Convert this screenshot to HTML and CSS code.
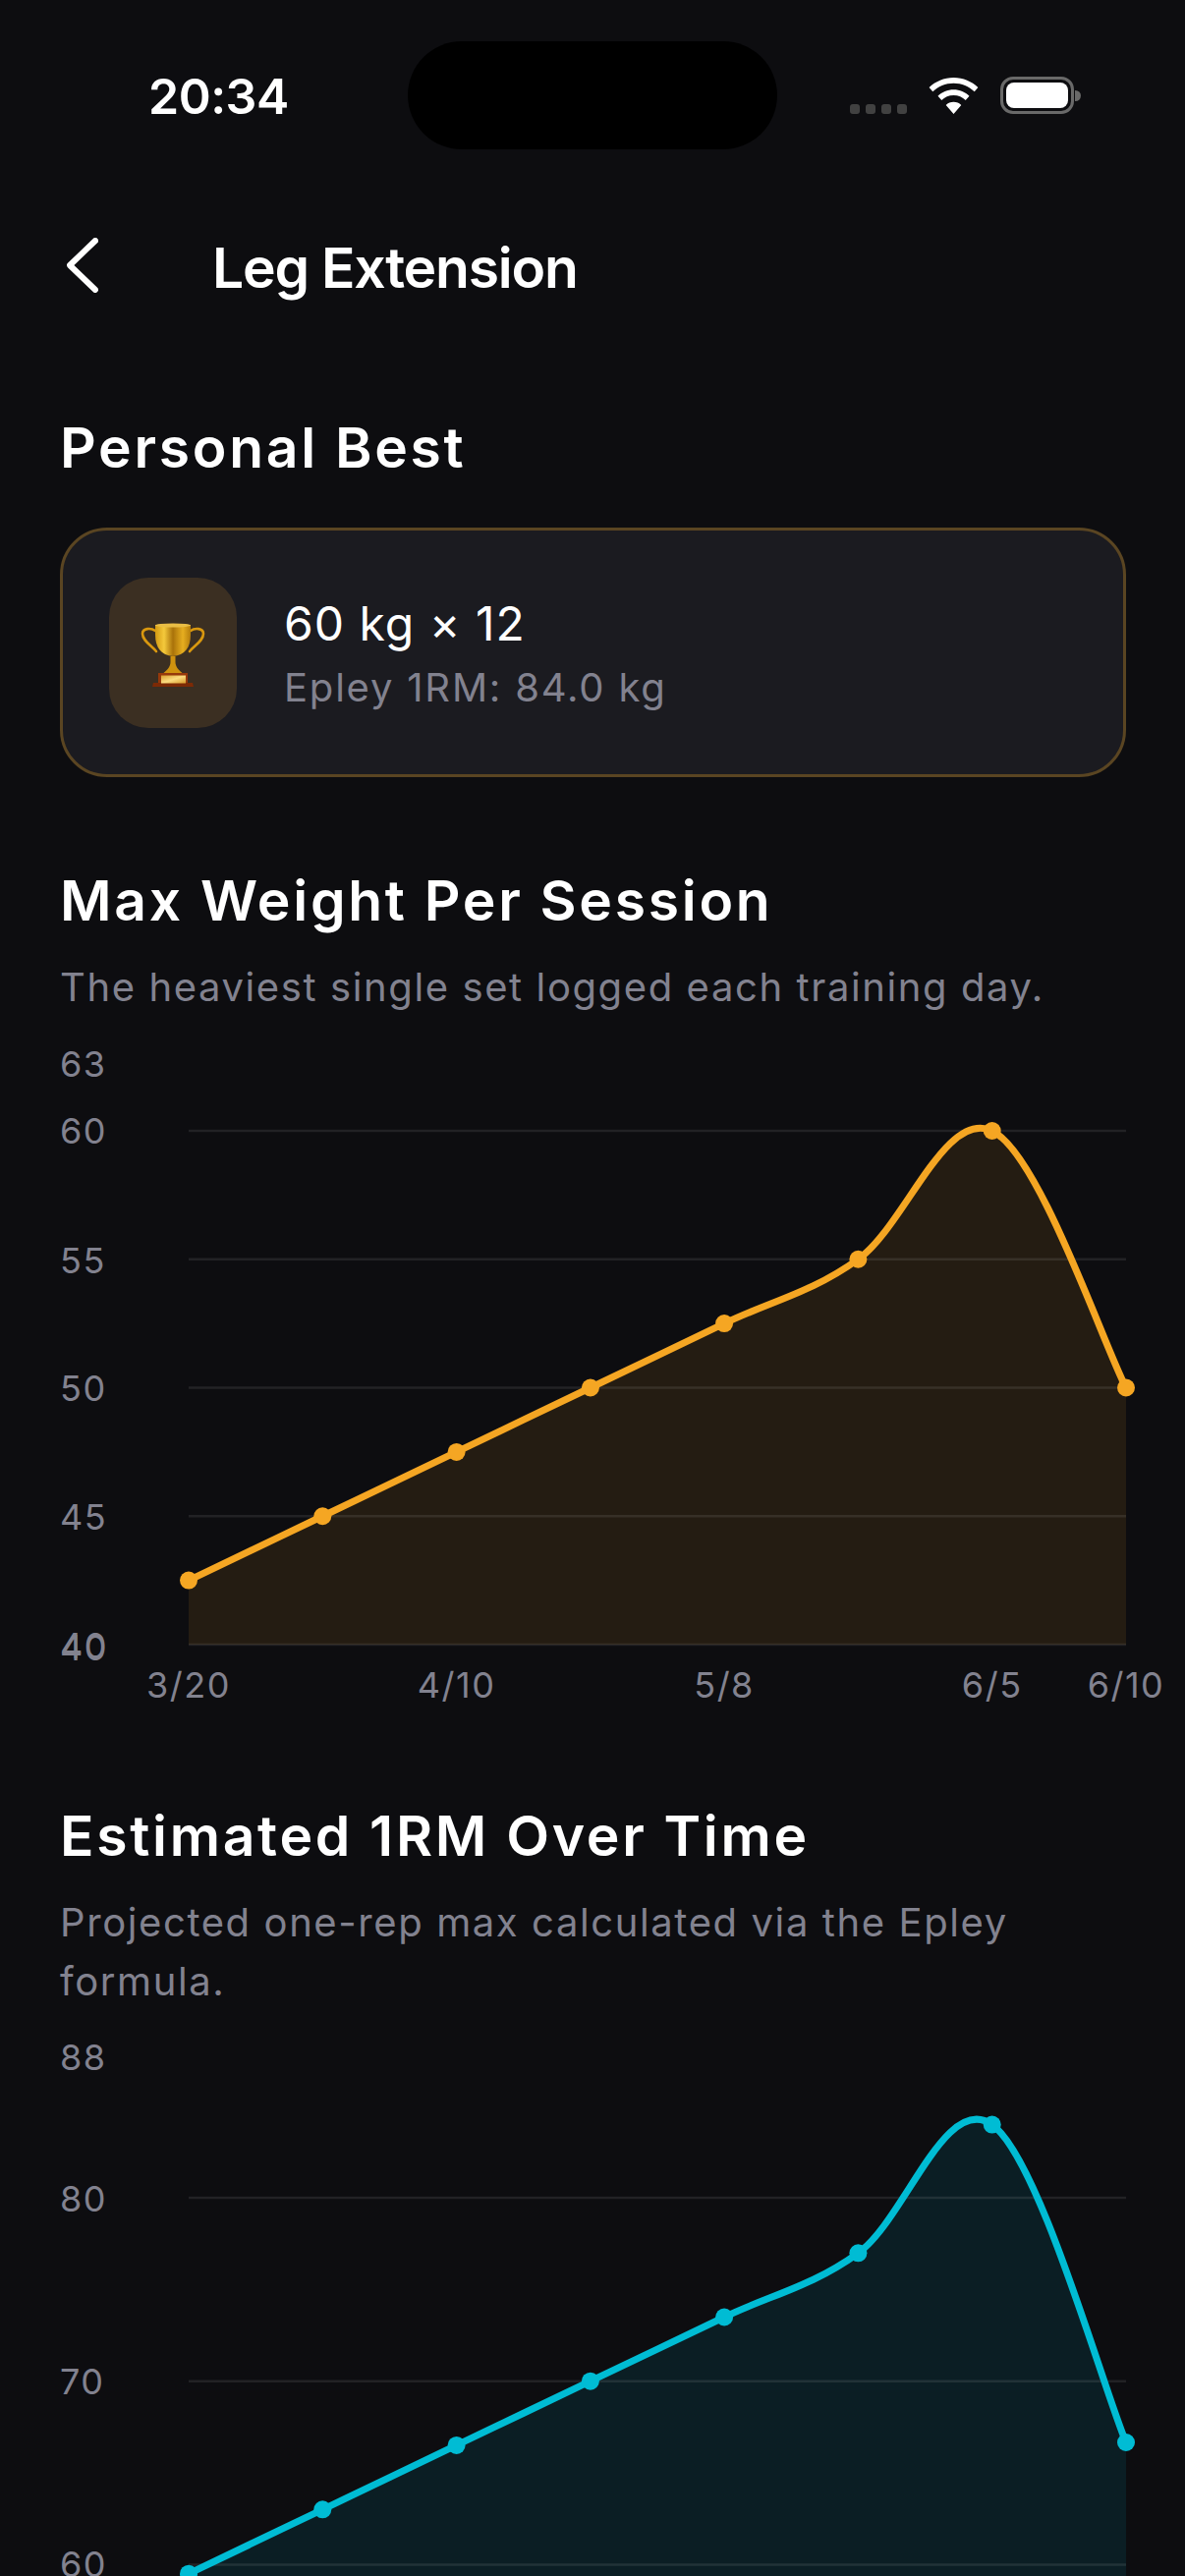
FILE: index.html
```html
<!DOCTYPE html>
<html lang="en">
<head>
<meta charset="utf-8">
<title>Leg Extension</title>
<link rel="stylesheet" href="styles.css">
</head>
<body>
<div class="screen">
  <div class="status">
    <span class="time">20:34</span>
    <div class="island"></div>
    <div class="status-icons">
      <div class="signal"><i></i><i></i><i></i><i></i></div>
      <svg class="wifi" width="51" height="37" viewBox="0 0 51 37"><path fill="#fff" d="M25.500 0C15.800 0 7 3.800 .6 10.100l3.700 4.200C9.700 9 17.200 5.700 25.500 5.700s15.800 3.300 21.200 8.600l3.700-4.200C44 3.800 35.200 0 25.500 0zM25.500 12.300c-6.200 0-11.900 2.500-16 6.500l3.800 4.200c3.100-3.100 7.400-5 12.200-5s9.100 1.900 12.200 5l3.800-4.200c-4.100-4-9.800-6.500-16-6.500zM25.500 24.700c-3 0-5.800 1.200-7.800 3.200L25.500 37l7.800-9.100c-2-2-4.800-3.200-7.800-3.200z"/></svg>
      <div class="battery"><div class="battery-fill"></div></div>
    </div>
  </div>

  <header class="nav">
    <svg class="back" width="32" height="56" viewBox="0 0 32 56"><path d="M29 3 3 28l26 25" fill="none" stroke="#fff" stroke-width="6" stroke-linecap="round" stroke-linejoin="round"/></svg>
    <h1 class="nav-title">Leg Extension</h1>
  </header>

  <section class="pb">
    <h2 class="heading">Personal Best</h2>
    <div class="pb-card">
      <div class="pb-icon"><svg class="trophy" width="66" height="66" viewBox="0 0 66 66">
        <defs>
          <linearGradient id="cup" x1="0" x2="1" y1="0" y2="0"><stop offset="0" stop-color="#d49a12"/><stop offset=".25" stop-color="#f4c93c"/><stop offset=".5" stop-color="#a9720a"/><stop offset=".78" stop-color="#e6ae20"/><stop offset="1" stop-color="#b57d0c"/></linearGradient>
          <linearGradient id="plate" x1="0" x2="1" y1="0" y2="1"><stop offset="0" stop-color="#d9a030"/><stop offset=".5" stop-color="#fbdc80"/><stop offset="1" stop-color="#d69a2a"/></linearGradient>
        </defs>
        <path d="M15 8C11 5 2 5 2 11c0 7 9 12 14 18M51 8c4-3 13-3 13 3 0 7-9 12-14 18" fill="none" stroke="#d9980f" stroke-width="2.600" stroke-linecap="round"/>
        <path d="M15 2h36v10c0 13-6 21-18 22C21 33 15 25 15 12z" fill="url(#cup)"/>
        <ellipse cx="33" cy="2.500" rx="18" ry="2" fill="#e9bd45"/>
        <path d="M30.500 34h5v6c0 4 3 8 7 11H23.500c4-3 7-7 7-11z" fill="#cf920f"/>
        <path d="M18 51h30v10H18z" fill="#96390b"/>
        <path d="M13 61h40l1 4H12z" fill="#7c2a06"/>
        <path d="M21 53.500h25v8H21z" fill="url(#plate)"/>
      </svg></div>
      <div class="pb-text">
        <div class="pb-value">60 kg × 12</div>
        <div class="pb-sub">Epley 1RM: 84.0 kg</div>
      </div>
    </div>
  </section>

  <section class="chart-section first">
    <h2 class="heading">Max Weight Per Session</h2>
    <p class="desc">The heaviest single set logged each training day.</p>
    <svg class="chart chart-one" viewBox="61 1060 1085 690">
      <path class="area-amber" d="M192 1608.600C215.850 1597.160 280.600 1566.100 328.300 1543.250S416.900 1500.800 464.600 1477.900 553.200 1435.400 600.900 1412.500 689.400 1370 737.100 1347.100C784.800 1324.200 825.700 1316.050 873.400 1281.750S962 1128.100 1009.700 1151 1122.150 1366.740 1146 1412.500V1674H192z"/>
      <g class="grid">
        <line x1="192" x2="1146" y1="1151" y2="1151"/>
        <line x1="192" x2="1146" y1="1281.750" y2="1281.750"/>
        <line x1="192" x2="1146" y1="1412.500" y2="1412.500"/>
        <line x1="192" x2="1146" y1="1543.250" y2="1543.250"/>
        <line x1="192" x2="1146" y1="1674" y2="1674"/>
      </g>
      <path class="line-amber" d="M192 1608.600C215.850 1597.160 280.600 1566.100 328.300 1543.250S416.900 1500.800 464.600 1477.900 553.200 1435.400 600.900 1412.500 689.400 1370 737.100 1347.100C784.800 1324.200 825.700 1316.050 873.400 1281.750S962 1128.100 1009.700 1151 1122.150 1366.740 1146 1412.500"/>
      <g class="dots-amber">
        <circle cx="192" cy="1608.600" r="9"/><circle cx="328.300" cy="1543.250" r="9"/><circle cx="464.600" cy="1477.900" r="9"/><circle cx="600.900" cy="1412.500" r="9"/><circle cx="737.100" cy="1347.100" r="9"/><circle cx="873.400" cy="1281.750" r="9"/><circle cx="1009.700" cy="1151" r="9"/><circle cx="1146" cy="1412.500" r="9"/>
      </g>
      <g class="axis">
        <text x="61" y="1096">63</text><text x="61" y="1164">60</text><text x="61" y="1295.500">55</text><text x="61" y="1426">50</text><text x="61" y="1557">45</text><text x="61" y="1688">40</text><text x="61" y="1690">40</text>
      </g>
      <g class="axis mid">
        <text x="192" y="1728">3/20</text><text x="464.600" y="1728">4/10</text><text x="737.100" y="1728">5/8</text><text x="1009.700" y="1728">6/5</text><text x="1146" y="1728">6/10</text>
      </g>
    </svg>
  </section>

  <section class="chart-section second">
    <h2 class="heading">Estimated 1RM Over Time</h2>
    <p class="desc">Projected one-rep max calculated via the Epley formula.</p>
    <svg class="chart chart-two" viewBox="61 2072 1085 550">
      <path class="area-cyan" d="M192 2619.700C215.850 2608.260 280.600 2577.200 328.300 2554.300S416.900 2511.760 464.600 2488.900 553.200 2446.500 600.900 2423.700 689.400 2381.300 737.100 2358.500C784.800 2335.700 825.700 2327.600 873.400 2293.300S962 2128.900 1009.700 2162.600 1122.150 2429.400 1146 2486V2700H192z"/>
      <g class="grid">
        <line x1="192" x2="1146" y1="2237" y2="2237"/>
        <line x1="192" x2="1146" y1="2423.700" y2="2423.700"/>
        <line x1="192" x2="1146" y1="2610.400" y2="2610.400"/>
      </g>
      <path class="line-cyan" d="M192 2619.700C215.850 2608.260 280.600 2577.200 328.300 2554.300S416.900 2511.760 464.600 2488.900 553.200 2446.500 600.900 2423.700 689.400 2381.300 737.100 2358.500C784.800 2335.700 825.700 2327.600 873.400 2293.300S962 2128.900 1009.700 2162.600 1122.150 2429.400 1146 2486"/>
      <g class="dots-cyan">
        <circle cx="192" cy="2619.700" r="9"/><circle cx="328.300" cy="2554.300" r="9"/><circle cx="464.600" cy="2488.900" r="9"/><circle cx="600.900" cy="2423.700" r="9"/><circle cx="737.100" cy="2358.500" r="9"/><circle cx="873.400" cy="2293.300" r="9"/><circle cx="1009.700" cy="2162.600" r="9"/><circle cx="1146" cy="2486" r="9"/>
      </g>
      <g class="axis">
        <text x="61" y="2107">88</text><text x="61" y="2251">80</text><text x="61" y="2437">70</text><text x="61" y="2623">60</text>
      </g>
    </svg>
  </section>
</div>
</body>
</html>
```

FILE: styles.css
```css
* { box-sizing: border-box; margin: 0; padding: 0; }
html, body { background: #0d0d10; }
body { width: 1206px; height: 2622px; overflow: hidden; font-family: Inter, "Noto Sans", sans-serif; color: #fff; }
.screen { width: 1206px; height: 2622px; overflow: hidden; background: #0d0d10; }

.status { position: relative; height: 225px; }
.time { position: absolute; left: 151px; top: 69px; font-size: 50px; line-height: 58px; font-weight: 600; letter-spacing: -0.5px; }
.island { position: absolute; left: 415px; top: 42px; width: 376px; height: 110px; border-radius: 55px; background: #000; }
.status-icons { position: absolute; left: 865px; top: 78px; display: flex; align-items: flex-end; }
.signal { display: flex; gap: 6px; margin-right: 22px; }
.signal i { width: 10px; height: 10px; border-radius: 3px; background: #414141; display: block; }
.wifi { margin-right: 22px; display: block; }
.battery { position: relative; width: 75px; height: 38px; border: 3px solid #696969; border-radius: 13px; padding: 3px; }
.battery::after { content: ""; position: absolute; left: 73px; top: 11px; width: 6px; height: 11px; border-radius: 0 6px 6px 0; background: #696969; }
.battery-fill { width: 100%; height: 100%; background: #fff; border-radius: 8px; }

.nav { display: flex; align-items: center; height: 90px; padding-left: 68px; }
.back { display: block; flex: none; }
.nav-title { margin-left: 116px; margin-top: 6px; font-size: 57px; line-height: 66px; font-weight: 600; letter-spacing: -1.25px; }

.pb { padding: 0 60px 0 61px; margin-top: 107px; }
.heading { font-size: 57px; line-height: 68px; font-weight: 600; letter-spacing: 2.7px; }
.pb-card { display: flex; align-items: center; height: 254px; margin-top: 47px; padding-left: 47px; background: #1b1b20; border: 3px solid #5a4522; border-radius: 48px; }
.pb-icon { display: flex; align-items: center; justify-content: center; width: 130px; height: 153px; border-radius: 40px; background: #3b2f22; flex: none; }
.trophy { display: block; margin-top: 6px; }
.pb-text { margin-left: 48px; }
.pb-value { font-size: 48px; line-height: 72px; font-weight: 400; letter-spacing: 1px; }
.pb-sub { font-size: 40px; line-height: 58px; color: #82828f; letter-spacing: 1.8px; }

.chart-section { padding: 0 60px 0 61px; }
.first { margin-top: 92px; }
.second { margin-top: 85px; }
.desc { margin-top: 24px; font-size: 40px; line-height: 60px; color: #82828f; letter-spacing: 1.6px; }
.chart { display: block; width: 1085px; margin-top: 25px; overflow: visible; }
.chart-one { height: 690px; }
.chart-two { height: 550px; }

.grid line { stroke: #fff; stroke-opacity: .09; stroke-width: 2.500; }
.area-amber { fill: #f5a623; fill-opacity: .1; }
.area-cyan { fill: #00bcd4; fill-opacity: .1; }
.line-amber, .line-cyan { fill: none; stroke-width: 7; stroke-linecap: round; stroke-linejoin: round; }
.line-amber { stroke: #f5a623; }
.line-cyan { stroke: #00bcd4; }
.dots-amber circle { fill: #f5a623; }
.dots-cyan circle { fill: #00bcd4; }
.axis text { font-family: Inter, "Noto Sans", sans-serif; font-size: 36px; fill: #82828f; letter-spacing: 1.500px; }
.axis.mid text { text-anchor: middle; }
```
